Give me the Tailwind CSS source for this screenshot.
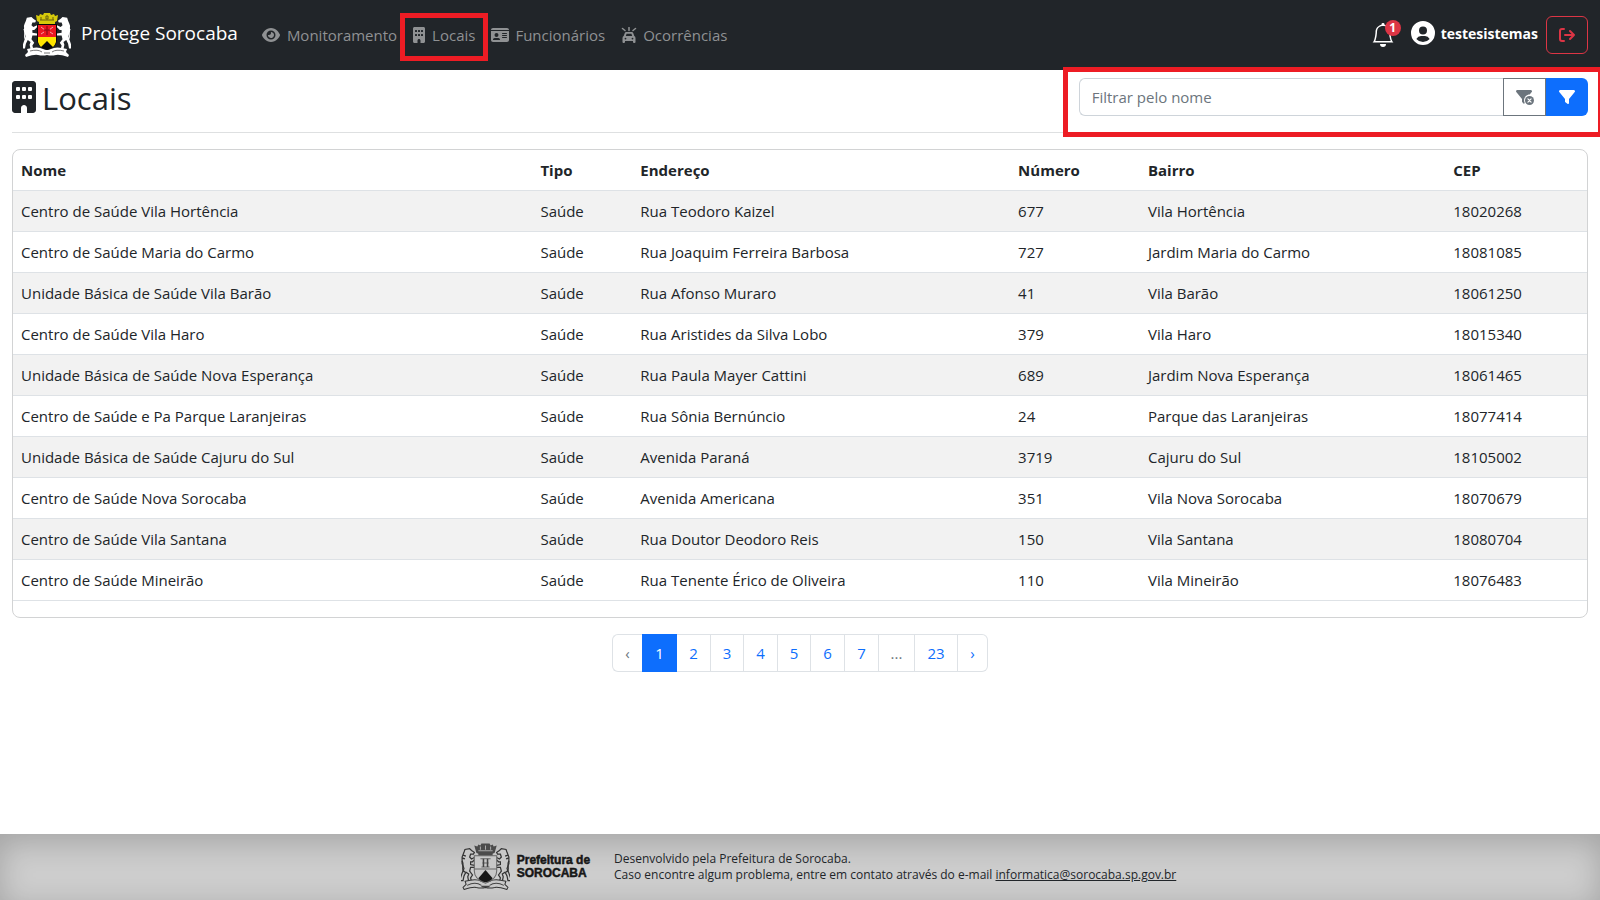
<!DOCTYPE html>
<html lang="pt-BR">
<head>
<meta charset="utf-8">
<meta name="viewport" content="width=device-width, initial-scale=1">
<title>Protege Sorocaba - Locais</title>
<script src="https://cdn.jsdelivr.net/npm/@tailwindcss/browser@4"></script>
</head>
<body class="flex min-h-screen flex-col overflow-x-hidden bg-white font-['Open_Sans','Noto_Sans',sans-serif] text-[15px] leading-6 text-[#212529]">

<svg class="hidden" aria-hidden="true">
  <symbol id="building" viewBox="0 0 384 512"><path fill-rule="evenodd" d="M48 0C21.500 0 0 21.500 0 48V464c0 26.500 21.500 48 48 48h96V432c0-26.500 21.500-48 48-48s48 21.500 48 48v80h96c26.500 0 48-21.500 48-48V48c0-26.500-21.500-48-48-48H48zM80 96h32q16 0 16 16v32q0 16-16 16H80q-16 0-16-16v-32q0-16 16-16zm96 0h32q16 0 16 16v32q0 16-16 16h-32q-16 0-16-16v-32q0-16 16-16zm96 0h32q16 0 16 16v32q0 16-16 16h-32q-16 0-16-16v-32q0-16 16-16zM80 224h32q16 0 16 16v32q0 16-16 16H80q-16 0-16-16v-32q0-16 16-16zm96 0h32q16 0 16 16v32q0 16-16 16h-32q-16 0-16-16v-32q0-16 16-16zm96 0h32q16 0 16 16v32q0 16-16 16h-32q-16 0-16-16v-32q0-16 16-16z"/></symbol>
  <symbol id="filter" viewBox="0 0 512 512"><path d="M3.900 54.900C10.500 40.900 24.500 32 40 32H472c15.500 0 29.500 8.900 36.100 22.900s4.600 30.500-5.200 42.500L320 320.900V448c0 12.100-6.800 23.200-17.700 28.600s-23.800 4.300-33.500-3l-64-48c-8.100-6-12.800-15.500-12.800-25.600V320.900L9 97.300C-.7 85.400-2.800 68.800 3.900 54.900z"/></symbol>
  <symbol id="supporter" viewBox="0 0 17 40">
    <path d="M9 1l2 2 3 2-1 2-3 0-1 3 2 2 4-2 1 1-4 4-2 0 0 3 5 1 0 2-5 0-1 4 3 4-2 3 1 4-3 0-1-5 1-3-3-2-2 4-1 5-4 0 1-2 2-6 2-5-2-5 0-7 2-5 1-3z"/>
    <path d="M4 26C-1 24 4 19 1 14M5 9L2 8M4 12L1 11" fill="none" stroke="currentColor" stroke-width="1.500"/>
  </symbol>
</svg>

<header class="flex h-[70px] shrink-0 items-center bg-[#212529] pr-3 pl-[22px]">
  <a href="#" class="flex items-center gap-2 text-white">
    <svg class="h-[46px] w-[50px] text-white" viewBox="0 0 50 46" aria-hidden="true">
      <g fill="currentColor">
        <use href="#supporter" x="1" y="4" width="16" height="37"/>
        <g transform="translate(50 0) scale(-1 1)"><use href="#supporter" x="1" y="4" width="16" height="37"/></g>
        <path d="M5 37q11-3 16 0 4 2 8 0 5-3 16 0l-1 3 3 3-1 2q-9-3-12-2-5 1-9 0-4 1-9 0-3-1-12 2l-1-2 3-3z"/>
      </g>
      <path d="M8 39q8-2 12 1M30 40q4-3 12-1M22 41h6" fill="none" stroke="#777" stroke-width="1"/>
      <path d="M14 3l3 1 1-2 3 1 1-2h6l1 2 3-1 1 2 3-1-1 6-2 1v3H17v-3l-2-1z" fill="#d6ca0b"/>
      <path d="M24 4h2v3h-2zM18 8h14M19 5v3M31 5v3" fill="none" stroke="#665f10"/>
      <path d="M15 12h20v16q0 7-10 10-10-3-10-10z" fill="#080808"/>
      <path d="M16 13h18v12H16z" fill="#ed1722"/>
      <path d="M16 25h18v5q-1 3-3 5l-6-6-6 6q-2-2-3-5z" fill="#ffe500"/>
      <path d="M19 15l4 3M31 15l-4 3M19 22l3-2M31 22l-3-2" stroke="#f4a5a8"/>
      <path d="M25 14v9M22 18h6" stroke="#a30d17" stroke-width="1.500"/>
    </svg>
    <span class="mb-1 pl-px text-[19px] leading-7">Protege Sorocaba</span>
  </a>
  <nav class="mb-px ml-6 flex items-center text-[#8f9193]">
    <a href="#" class="flex items-center gap-[7px]">
      <svg class="h-4 w-[18px] fill-current" viewBox="0 0 576 512" aria-hidden="true"><path fill-rule="evenodd" d="M288 32c-80.800 0-145.500 36.800-192.600 80.600C48.600 156 17.300 208 2.500 243.700c-3.300 7.900-3.300 16.700 0 24.600C17.300 304 48.600 356 95.400 399.400C142.500 443.200 207.200 480 288 480s145.500-36.800 192.600-80.600c46.800-43.500 78.100-95.400 93-131.100c3.300-7.900 3.300-16.700 0-24.600c-14.900-35.700-46.200-87.700-93-131.100C433.500 68.800 368.800 32 288 32zM144 256a144 144 0 1 1 288 0 144 144 0 1 1-288 0zm144-64c0 35.300-28.700 64-64 64c-7.100 0-13.900-1.200-20.300-3.300c-5.500-1.800-11.900 1.600-11.700 7.400c.3 6.900 1.300 13.800 3.200 20.700c13.700 51.200 66.400 81.600 117.600 67.900s81.600-66.400 67.900-117.600c-11.100-41.500-47.800-69.400-88.600-71.100c-5.800-.2-9.200 6.100-7.400 11.700c2.100 6.400 3.300 13.200 3.300 20.300z"/></svg>
      Monitoramento
    </a>
    <a href="#" class="relative ml-4 flex items-center gap-[7px]" aria-current="page">
      <svg class="h-4 w-3 fill-current" aria-hidden="true"><use href="#building"/></svg>
      Locais
      <span class="pointer-events-none absolute -top-[10px] -right-[13px] -bottom-[14px] -left-[13px] border-[5px] border-[#ed1c24]"></span>
    </a>
    <a href="#" class="ml-4 flex items-center gap-[6px]">
      <svg class="h-4 w-[18px] fill-current" viewBox="0 0 576 512" aria-hidden="true"><path fill-rule="evenodd" d="M0 96h576c0-35.300-28.700-64-64-64H64C28.700 32 0 60.700 0 96zm0 32v288c0 35.300 28.700 64 64 64h448c35.300 0 64-28.700 64-64V128zM64 405c0-29 24-53 53-53h118c29 0 53 24 53 53 0 6-5 11-11 11H75c-6 0-11-5-11-11zM176 192a64 64 0 1 1 0 128 64 64 0 1 1 0-128zm192 0h128q16 0 16 16t-16 16H368q-16 0-16-16t16-16zm0 64h128q16 0 16 16t-16 16H368q-16 0-16-16t16-16zm0 64h128q16 0 16 16t-16 16H368q-16 0-16-16t16-16z"/></svg>
      Funcionários
    </a>
    <a href="#" class="ml-4 flex items-center gap-[6px]">
      <svg class="h-4 w-4" viewBox="0 0 16 16" aria-hidden="true"><path d="M8 .5v3M1.500 1.500L4 3.500M14.500 1.500L12 3.500" stroke="currentColor" stroke-width="1.500" stroke-linecap="round"/><path fill="currentColor" fill-rule="evenodd" d="M5.200 5h5.600q1 0 1.400 1l1.100 3q1.200.5 1.200 2v4q0 1-1 1h-.5q-1 0-1-1v-1H4v1q0 1-1 1h-.5q-1 0-1-1v-4q0-1.500 1.200-2l1.100-3q.4-1 1.400-1zm.4 1.700L4.800 9h6.400l-.8-2.300zM4.500 10.700a.9.900 0 1 0 0 1.800.9.900 0 1 0 0-1.800zm7 0a.9.900 0 1 0 0 1.800.9.900 0 1 0 0-1.800z"/></svg>
      Ocorrências
    </a>
  </nav>
  <div class="ml-auto flex items-center text-white">
    <button type="button" class="relative mr-4" aria-label="Notificações">
      <svg class="h-6 w-6 fill-current" viewBox="0 0 16 16" aria-hidden="true"><path d="M8 16a2 2 0 0 0 2-2H6a2 2 0 0 0 2 2zM8 1.918l-.797.161A4.002 4.002 0 0 0 4 6c0 .628-.134 2.197-.459 3.742-.16.767-.376 1.566-.663 2.258h10.244c-.287-.692-.502-1.490-.663-2.258C12.134 8.197 12 6.628 12 6a4.002 4.002 0 0 0-3.203-3.920L8 1.917zM14.220 12c.223.447.481.801.780 1H1c.299-.199.557-.553.780-1C2.680 10.200 3 6.880 3 6c0-2.420 1.720-4.440 4.005-4.901a1 1 0 1 1 1.990 0A5.002 5.002 0 0 1 13 6c0 .880.320 4.200 1.220 6z"/></svg>
      <span class="absolute -top-[3px] -right-[6px] flex h-4 w-4 items-center justify-center rounded-full bg-[#dc3545] text-[12px] font-bold leading-4">1</span>
    </button>
    <svg class="mr-[6px] mb-1 h-6 w-6 fill-current" viewBox="0 0 24 24" aria-hidden="true"><path fill-rule="evenodd" d="M12 0a12 12 0 1 0 0 24 12 12 0 1 0 0-24zM12 5.500a4 4 0 1 1 0 8 4 4 0 1 1 0-8zM10 15h4q3 0 4.700 3a9 9 0 0 1-13.400 0Q7 15 10 15z"/></svg>
    <span class="mb-[2px] text-[14px] font-bold">testesistemas</span>
    <button type="button" class="ml-2 flex h-[38px] w-[42px] items-center justify-center rounded-md border border-[#dc3545] text-[#dc3545]" aria-label="Sair">
      <svg class="h-4 w-4" viewBox="0 0 16 16" fill="none" stroke="currentColor" stroke-width="2" stroke-linecap="round" stroke-linejoin="round" aria-hidden="true"><path d="M5 2H3Q1 2 1 4v8q0 2 2 2h2M6 8h9M11 4l4 4-4 4"/></svg>
    </button>
  </div>
</header>

<main class="flex-1">
  <div class="flex items-start">
    <h1 class="flex flex-1 items-center gap-[6px] pt-[9px] pl-3 text-[31px] leading-[38px] font-medium">
      <svg class="mb-[2px] h-8 w-6 fill-current" aria-hidden="true"><use href="#building"/></svg>
      Locais
    </h1>
    <form class="relative flex w-1/3 px-3 pt-2">
      <input type="text" aria-label="Filtrar pelo nome" placeholder="Filtrar pelo nome" class="h-[38px] min-w-0 flex-1 rounded-l-md border border-r-0 border-[#ced4da] bg-white px-3 placeholder:text-[#6c757d]">
      <button type="button" class="flex h-[38px] w-[43px] items-center justify-center border border-[#6c757d] bg-white text-[#6c757d]" aria-label="Limpar filtro">
        <svg class="h-4 w-[18px]" viewBox="0 0 576 512" aria-hidden="true"><path fill="currentColor" d="M4 55C10 41 24 32 40 32H472c15 0 29 9 36 23s5 30-5 42l-65 80C340 177 258 256 258 360c0 32 8 62 22 88-15 31-48 28-75-22-8-6-13-16-13-26V321L9 97C-1 85-3 69 4 55z"/><circle cx="432" cy="368" r="144" fill="currentColor"/><path d="M382 318l100 100M482 318L382 418" stroke="white" stroke-width="38" stroke-linecap="round"/></svg>
      </button>
      <button type="submit" class="flex h-[38px] w-[42px] items-center justify-center rounded-r-md bg-[#0d6efd] text-white" aria-label="Filtrar">
        <svg class="h-4 w-4 fill-current" aria-hidden="true"><use href="#filter"/></svg>
      </button>
      <span class="pointer-events-none absolute -top-[3px] -right-[3px] -left-1 h-[70px] border-[5px] border-[#ed1c24]"></span>
    </form>
  </div>
  <hr class="mx-3 mt-[15px] border-[#dee0e1]">

  <div class="mx-3 mt-4 overflow-hidden rounded-lg border border-[#d2d3d4] pb-4">
    <table class="w-full table-fixed border-collapse text-left">
      <colgroup><col class="w-[33%]"><col class="w-[6.350%]"><col class="w-[24%]"><col class="w-[8.250%]"><col class="w-[19.400%]"><col></colgroup>
      <thead>
        <tr class="h-10 border-b border-[#dee2e6] font-bold"><th class="px-2">Nome</th><th class="px-2">Tipo</th><th class="px-2">Endereço</th><th class="px-2">Número</th><th class="px-2">Bairro</th><th class="px-2">CEP</th></tr>
      </thead>
      <tbody>
        <tr class="h-[41px] border-b border-[#dee2e6] odd:bg-[#f2f2f2]"><td class="px-2">Centro de Saúde Vila Hortência</td><td class="px-2">Saúde</td><td class="px-2">Rua Teodoro Kaizel</td><td class="px-2">677</td><td class="px-2">Vila Hortência</td><td class="px-2">18020268</td></tr>
        <tr class="h-[41px] border-b border-[#dee2e6] odd:bg-[#f2f2f2]"><td class="px-2">Centro de Saúde Maria do Carmo</td><td class="px-2">Saúde</td><td class="px-2">Rua Joaquim Ferreira Barbosa</td><td class="px-2">727</td><td class="px-2">Jardim Maria do Carmo</td><td class="px-2">18081085</td></tr>
        <tr class="h-[41px] border-b border-[#dee2e6] odd:bg-[#f2f2f2]"><td class="px-2">Unidade Básica de Saúde Vila Barão</td><td class="px-2">Saúde</td><td class="px-2">Rua Afonso Muraro</td><td class="px-2">41</td><td class="px-2">Vila Barão</td><td class="px-2">18061250</td></tr>
        <tr class="h-[41px] border-b border-[#dee2e6] odd:bg-[#f2f2f2]"><td class="px-2">Centro de Saúde Vila Haro</td><td class="px-2">Saúde</td><td class="px-2">Rua Aristides da Silva Lobo</td><td class="px-2">379</td><td class="px-2">Vila Haro</td><td class="px-2">18015340</td></tr>
        <tr class="h-[41px] border-b border-[#dee2e6] odd:bg-[#f2f2f2]"><td class="px-2">Unidade Básica de Saúde Nova Esperança</td><td class="px-2">Saúde</td><td class="px-2">Rua Paula Mayer Cattini</td><td class="px-2">689</td><td class="px-2">Jardim Nova Esperança</td><td class="px-2">18061465</td></tr>
        <tr class="h-[41px] border-b border-[#dee2e6] odd:bg-[#f2f2f2]"><td class="px-2">Centro de Saúde e Pa Parque Laranjeiras</td><td class="px-2">Saúde</td><td class="px-2">Rua Sônia Bernúncio</td><td class="px-2">24</td><td class="px-2">Parque das Laranjeiras</td><td class="px-2">18077414</td></tr>
        <tr class="h-[41px] border-b border-[#dee2e6] odd:bg-[#f2f2f2]"><td class="px-2">Unidade Básica de Saúde Cajuru do Sul</td><td class="px-2">Saúde</td><td class="px-2">Avenida Paraná</td><td class="px-2">3719</td><td class="px-2">Cajuru do Sul</td><td class="px-2">18105002</td></tr>
        <tr class="h-[41px] border-b border-[#dee2e6] odd:bg-[#f2f2f2]"><td class="px-2">Centro de Saúde Nova Sorocaba</td><td class="px-2">Saúde</td><td class="px-2">Avenida Americana</td><td class="px-2">351</td><td class="px-2">Vila Nova Sorocaba</td><td class="px-2">18070679</td></tr>
        <tr class="h-[41px] border-b border-[#dee2e6] odd:bg-[#f2f2f2]"><td class="px-2">Centro de Saúde Vila Santana</td><td class="px-2">Saúde</td><td class="px-2">Rua Doutor Deodoro Reis</td><td class="px-2">150</td><td class="px-2">Vila Santana</td><td class="px-2">18080704</td></tr>
        <tr class="h-[41px] border-b border-[#dee2e6] odd:bg-[#f2f2f2]"><td class="px-2">Centro de Saúde Mineirão</td><td class="px-2">Saúde</td><td class="px-2">Rua Tenente Érico de Oliveira</td><td class="px-2">110</td><td class="px-2">Vila Mineirão</td><td class="px-2">18076483</td></tr>
      </tbody>
    </table>
  </div>

  <nav class="mt-4 flex justify-center" aria-label="Paginação">
    <ul class="flex h-[38px] text-center leading-9 text-[#0d6efd]">
      <li class="w-[30px] rounded-l-md border border-r-0 border-[#dee2e6] text-[#6c757d]">‹</li>
      <li class="w-[35px] border border-[#0d6efd] bg-[#0d6efd] text-white" aria-current="page">1</li>
      <li class="w-[34px] border border-l-0 border-[#dee2e6]"><a href="#" class="block">2</a></li>
      <li class="w-[33px] border border-l-0 border-[#dee2e6]"><a href="#" class="block">3</a></li>
      <li class="w-[34px] border border-l-0 border-[#dee2e6]"><a href="#" class="block">4</a></li>
      <li class="w-[33px] border border-l-0 border-[#dee2e6]"><a href="#" class="block">5</a></li>
      <li class="w-[34px] border border-l-0 border-[#dee2e6]"><a href="#" class="block">6</a></li>
      <li class="w-[34px] border border-l-0 border-[#dee2e6]"><a href="#" class="block">7</a></li>
      <li class="w-9 border border-l-0 border-[#dee2e6] text-[#6c757d]">...</li>
      <li class="w-[43px] border border-l-0 border-[#dee2e6]"><a href="#" class="block">23</a></li>
      <li class="w-[30px] rounded-r-md border border-l-0 border-[#dee2e6]"><a href="#" class="block">›</a></li>
    </ul>
  </nav>
</main>

<footer class="flex h-[66px] shrink-0 items-center justify-center gap-6 bg-[#cdcdcd] pl-9 text-[12px] leading-4 shadow-[inset_0_8px_30px_rgba(0,0,0,0.2)]">
  <div class="flex items-center gap-[6px]">
    <svg class="h-12 w-[51px] text-[#333]" viewBox="0 0 50 46" aria-hidden="true">
      <g fill="#c8c8c8" stroke="#333" stroke-width="1.300">
        <use href="#supporter" x="1" y="4" width="16" height="37"/>
        <g transform="translate(50 0) scale(-1 1)"><use href="#supporter" x="1" y="4" width="16" height="37"/></g>
        <path stroke-width="1" d="M5 37q11-3 16 0 4 2 8 0 5-3 16 0l-1 3 3 3-1 2q-9-3-12-2-5 1-9 0-4 1-9 0-3-1-12 2l-1-2 3-3z"/>
      </g>
      <path d="M14 2l3 1 1-2 2 1 1-2h8l1 2 2-1 1 2 3-1-2 7-2 1v2H18v-2l-2-1z" fill="#4b4b4b"/>
      <path d="M18 7h14M20 3v3M25 2v4M30 3v3" fill="none" stroke="#aaa"/>
      <path d="M14 12h22v15q0 8-11 12-11-4-11-12z" fill="#c8c8c8" stroke="#666"/>
      <path d="M14 25h22M20 15h10M21 23h8M22 19h6" fill="none" stroke="#666"/>
      <path d="M23 15v8M27 15v8" stroke="#444" stroke-width="1.500"/>
      <path d="M25 26l7 8q-2 3-7 4-5-1-7-4z" fill="#171717"/>
      <path d="M7 41q8-4 14 0M29 41q6-4 14 0M21 42h8" fill="none" stroke="#444"/>
    </svg>
    <div class="flex flex-col font-['Liberation_Sans',sans-serif] text-[12px] leading-[13px] font-black text-[#171717] [-webkit-text-stroke:0.500px_#171717]"><span>Prefeitura de</span><span>SOROCABA</span></div>
  </div>
  <p>Desenvolvido pela Prefeitura de Sorocaba.<br>Caso encontre algum problema, entre em contato através do e-mail <a href="mailto:informatica@sorocaba.sp.gov.br" class="underline">informatica@sorocaba.sp.gov.br</a></p>
</footer>
</body>
</html>
